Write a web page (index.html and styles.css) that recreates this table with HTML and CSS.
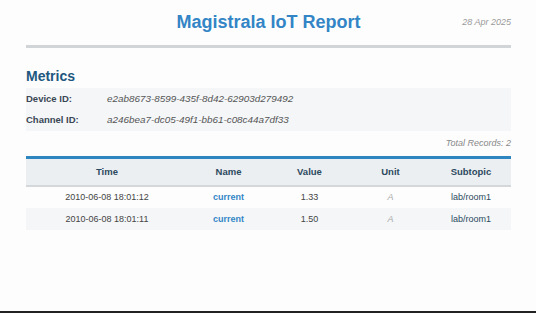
FILE: index.html
```html
<!DOCTYPE html>
<html lang="en">
<head>
    <meta charset="UTF-8">
    <title>Magistrala IoT Report</title>
    <link rel="stylesheet" href="styles.css">
</head>
<body>
    <div class="page">
        <div class="header">
            <span></span>
            <h1>Magistrala IoT Report</h1>
            <span class="date">28 Apr 2025</span>
        </div>

        <h2>Metrics</h2>
        <div class="meta">
            <div class="meta-row"><span class="meta-label">Device ID:</span><span class="meta-value">e2ab8673-8599-435f-8d42-62903d279492</span></div>
            <div class="meta-row"><span class="meta-label">Channel ID:</span><span class="meta-value">a246bea7-dc05-49f1-bb61-c08c44a7df33</span></div>
        </div>
        <div class="total">Total Records: 2</div>

        <table class="records">
            <thead>
                <tr><th class="col-time">Time</th><th>Name</th><th>Value</th><th>Unit</th><th>Subtopic</th></tr>
            </thead>
            <tbody>
                <tr><td>2010-06-08 18:01:12</td><td class="name">current</td><td>1.33</td><td class="unit">A</td><td class="subtopic">lab/room1</td></tr>
                <tr><td>2010-06-08 18:01:11</td><td class="name">current</td><td>1.50</td><td class="unit">A</td><td class="subtopic">lab/room1</td></tr>
            </tbody>
        </table>
    </div>
</body>
</html>
```

FILE: styles.css
```css
* { padding: 0; margin: 0; box-sizing: border-box; }
body {
    font-family: "Liberation Sans", Arial, sans-serif;
    background-color: #fdfdfd;
    color: #444;
}
.page {
    height: 313px;
    padding: 0 25px 0 26px;
    border-bottom: 2px solid #222;
}
.header {
    display: grid;
    grid-template-columns: 1fr auto 1fr;
    align-items: center;
    padding: 10px 0 11px;
    border-bottom: 3px solid #d2d5d8;
}
h1 { font-size: 18px; color: #3385c6; line-height: 24px; }
.date {
    text-align: right;
    font-size: 9px;
    font-style: italic;
    color: #999;
}
h2 {
    margin-top: 19px;
    font-size: 14px;
    color: #21577f;
    line-height: 18px;
}
.meta {
    margin-top: 3px;
    background-color: #f4f6f8;
    padding: 0 0 1px;
}
.meta-row {
    display: flex;
    height: 21px;
    align-items: center;
}
.meta-label { width: 81px; font-weight: bold; color: #3a4754; font-size: 9.5px; }
.meta-value { font-style: italic; color: #555; font-size: 9.9px; }
.total {
    text-align: right;
    font-size: 9px;
    font-style: italic;
    color: #888;
    margin-top: 7px;
    line-height: 10px;
}
.records {
    width: 100%;
    margin-top: 8px;
    border-collapse: collapse;
    border-top: 3px solid #2e86c1;
    font-size: 9px;
}
.records th {
    background-color: #eceff1;
    color: #2c4a60;
    font-size: 9.5px;
    height: 28px;
    border-bottom: 2px solid #d5d8da;
    width: 16.7%;
}
.records th.col-time { width: 33.4%; }
.records td { text-align: center; height: 22px; }
.records tbody tr:nth-child(2) td { background-color: #f4f6f8; }
.records td.name { color: #3385c6; font-weight: bold; }
.records td.unit { font-style: italic; color: #aaa; }
.records td.subtopic { color: #2c4a60; }
```
